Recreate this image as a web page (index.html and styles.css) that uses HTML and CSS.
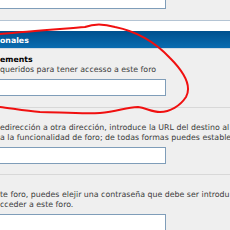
FILE: index.html
```html
<!DOCTYPE html>
<html>
<head>
<meta charset="utf-8">
<link rel="stylesheet" href="styles.css">
</head>
<body>
<div class="page">
  <div class="prev"><div class="field top"></div></div>
  <div class="panel">
    <div class="head">onales</div>
    <div class="row first">
      <div class="title">ements</div>
      <div class="explain">queridos para tener accesso a este foro</div>
      <div class="field"></div>
    </div>
    <div class="row">
      <div class="title">&nbsp;</div>
      <div class="explain">edirección a otra dirección, introduce la URL del destino al<br>a la funcionalidad de foro; de todas formas puedes estable</div>
      <div class="field"></div>
    </div>
    <div class="row">
      <div class="title">&nbsp;</div>
      <div class="explain">te foro, puedes elejir una contraseña que debe ser introdu<br>cceder a este foro.</div>
      <div class="field"></div>
    </div>
  </div>
  <svg class="mark" width="230" height="230" viewBox="0 0 230 230">
    <path d="M0,34 C30,31 60,29 85,27 C95,23 105,24 115,27 C135,31 155,42 170,58 C184,72 192,86 186,97 C180,106 170,112 160,112 C152,112 146,108 138,107 C125,107 118,112 100,113 C80,114 55,112 40,112 C25,111 10,108 0,107" fill="none" stroke="#f01010" stroke-width="2" stroke-linecap="round"/>
  </svg>
</div>
</body>
</html>
```
FILE: styles.css
```css
html, body {
  margin: 0;
  padding: 0;
  background: #fff;
}
.page {
  position: relative;
  width: 230px;
  height: 230px;
  overflow: hidden;
  background: #fff;
  font-family: "DejaVu Sans", Verdana, sans-serif;
}
.prev {
  display: flow-root;
  background: #efefef;
  height: 20px;
  border-bottom: 1px solid #b4c4d4;
}
.panel {
  margin-top: 10px;
}
.head {
  box-sizing: border-box;
  height: 18px;
  padding-top: 2px;
  line-height: 15px;
  background: linear-gradient(#00508e, #0a6cb0);
  color: #fff;
  font-weight: bold;
  font-size: 7.8px;
  white-space: nowrap;
  border-bottom: 1px solid #d0dae4;
}
.row {
  background: #efefef;
  padding: 5px 0 10px;
  border-bottom: 1px solid #d8d8d8;
}
.row.first {
  padding-top: 6px;
  padding-bottom: 11px;
}
.title {
  font-weight: bold;
  font-size: 7.8px;
  line-height: 10px;
  color: #000;
  white-space: nowrap;
}
.explain {
  font-size: 7.85px;
  line-height: 10px;
  color: #3c3c3c;
  white-space: nowrap;
}
.field {
  box-sizing: border-box;
  width: 171px;
  height: 17px;
  margin-left: -5px;
  margin-top: 4px;
  border: 1px solid #7f9db9;
  background: #fff;
}
.field.top {
  margin-top: -8px;
}
.mark {
  position: absolute;
  left: 0;
  top: 0;
}
```
